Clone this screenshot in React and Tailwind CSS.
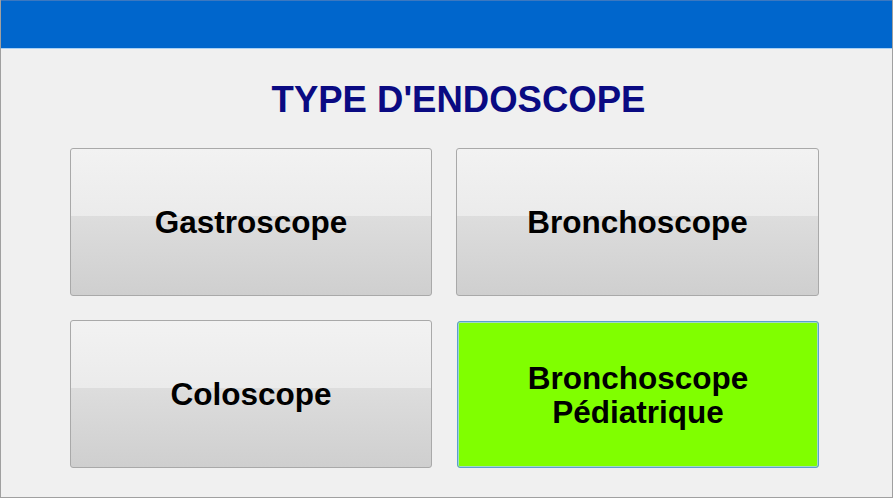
export default function App() {
  const btn =
    "flex items-center justify-center text-center rounded-[3px] border border-[#a9a9a9] bg-[linear-gradient(to_bottom,#f2f2f2_0%,#ebebeb_46%,#dddddd_46%,#cfcfcf_100%)] text-black font-bold text-[31.5px] leading-[34px]";
  return (
    <div
      className="w-[893px] h-[498px] bg-[#f0f0f0] border-l border-r border-b border-[#a0a0a0] flex flex-col"
      style={{ fontFamily: '"Liberation Sans", Arial, sans-serif' }}
    >
      <div className="h-[49px] bg-[#0066cc] border-b border-[#a8d0f4] border-t border-t-[#3c78c0]" />
      <div className="h-[99px] flex items-center justify-center pt-[3px] pl-[24px]">
        <h1 className="text-[36.5px] leading-none font-bold text-[#0a0a82]">TYPE D'ENDOSCOPE</h1>
      </div>
      <div className="pl-[69px] grid grid-cols-[362px_363px] grid-rows-[148px_148px] gap-x-[24px] gap-y-[24px]">
        <div className={btn}>Gastroscope</div>
        <div className={btn}>Bronchoscope</div>
        <div className={btn}>Coloscope</div>
        <div className="flex items-center justify-center text-center rounded-[3px] border border-[#5c9fd0] shadow-[inset_0_0_0_1px_#9fd8c8] bg-[#80ff00] text-black font-bold text-[31.5px] leading-[34px] ml-[1px] mt-[1px]">
          Bronchoscope
          <br />
          Pédiatrique
        </div>
      </div>
    </div>
  );
}
